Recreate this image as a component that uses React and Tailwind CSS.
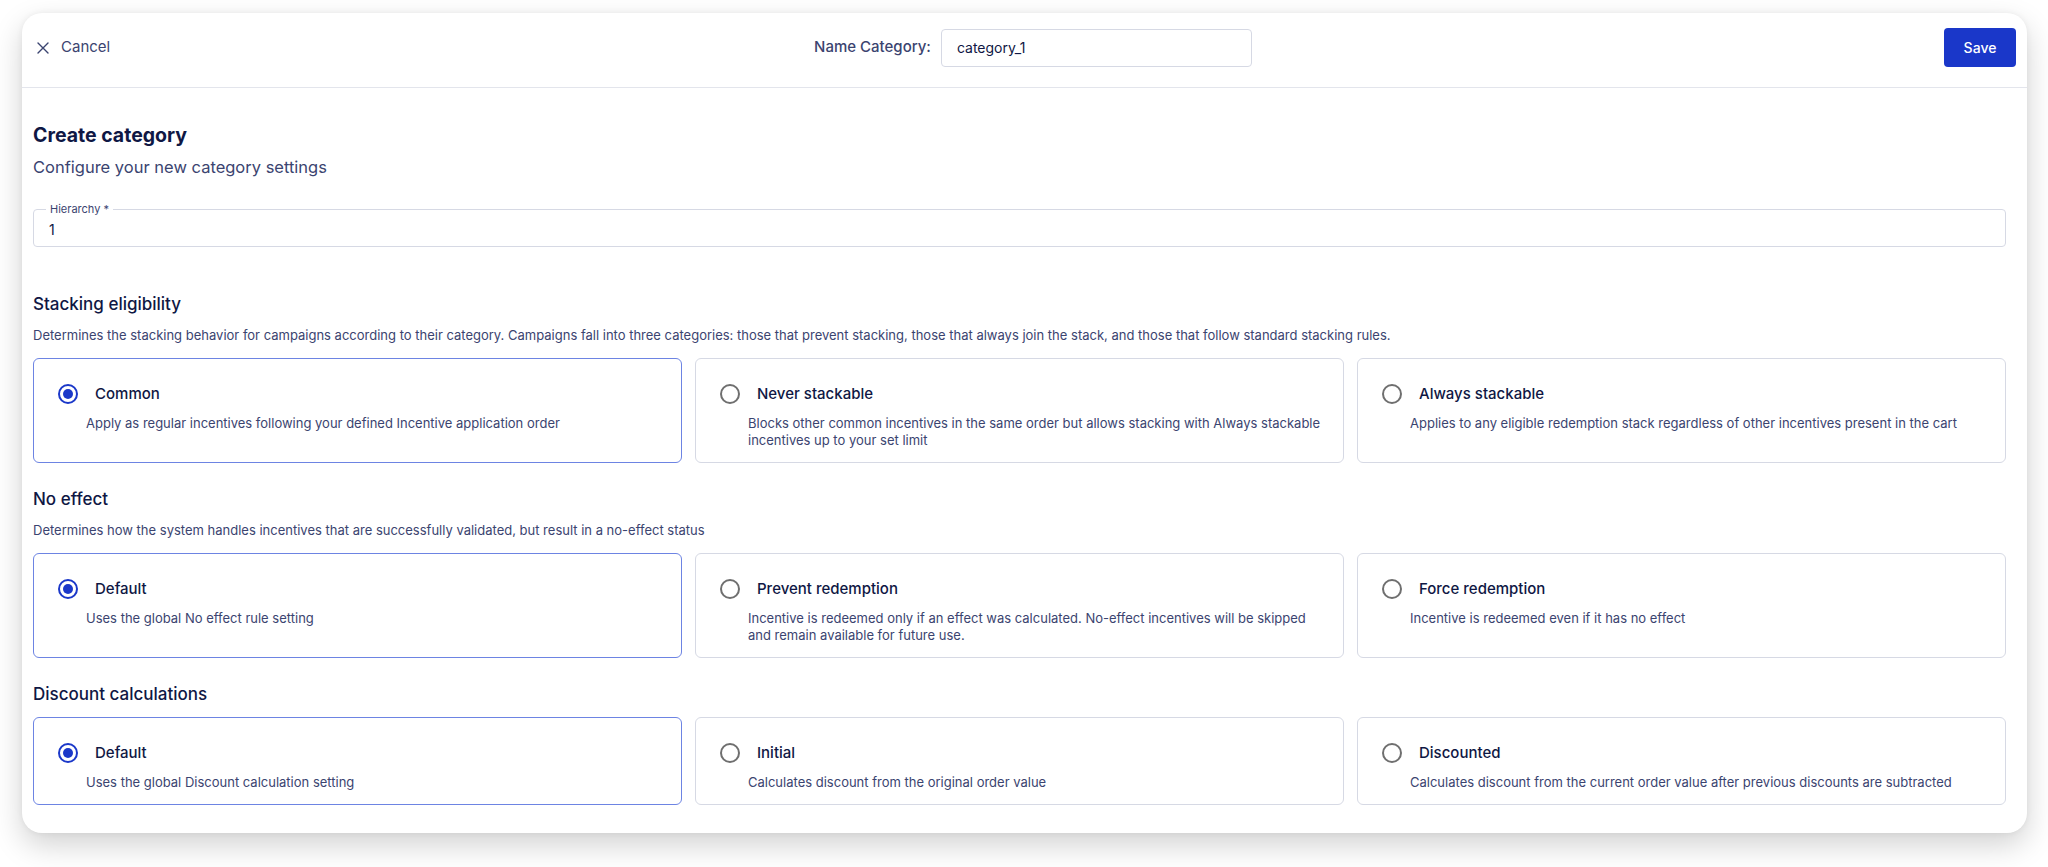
import React from "react";

const NAVY = "text-[#0f1744]";

function Radio({ checked }) {
  if (checked) {
    return (
      <span className="flex h-[20px] w-[20px] shrink-0 items-center justify-center rounded-full border-2 border-[#1b38c9]">
        <span className="h-[10px] w-[10px] rounded-full bg-[#1b38c9]" />
      </span>
    );
  }
  return <span className="h-[20px] w-[20px] shrink-0 rounded-full border-2 border-[#6f6f6f]" />;
}

function OptionCard({ title, desc, checked }) {
  return (
    <div
      className={
        "rounded-[6px] border bg-white pl-[24px] pr-[20px] pt-[25px] pb-[13px] " +
        (checked ? "border-[#6d84e3]" : "border-[#d6d9e4]")
      }
    >
      <div className="flex h-[20px] items-center">
        <Radio checked={checked} />
        <span className={"ml-[17px] text-[15px] font-medium leading-[20px] " + NAVY}>{title}</span>
      </div>
      <p className="mt-[11px] ml-[28px] text-[13px] leading-[17px] text-[#3b4470]">{desc}</p>
    </div>
  );
}

function Section({ title, desc, options, first }) {
  return (
    <section className={first ? "mt-[43px]" : "mt-[22px]"}>
      <h2 className={"text-[17px] font-medium leading-[28px] " + NAVY}>{title}</h2>
      {desc && <p className="mt-[9px] text-[13px] leading-[16px] text-[#3b4470]">{desc}</p>}
      <div className={"grid grid-cols-3 gap-[13px] " + (desc ? "mt-[15px]" : "mt-[9px]")}>
        {options.map((o) => (
          <OptionCard key={o.title} {...o} />
        ))}
      </div>
    </section>
  );
}

export default function App() {
  return (
    <div
      className="h-[867px] w-[2048px] overflow-hidden bg-white pt-[13px] pl-[22px] pr-[21px]"
      style={{ fontFamily: "Inter, 'Noto Sans', sans-serif" }}
    >
      <div className="h-[820px] overflow-hidden rounded-[20px] bg-white shadow-[0_12px_30px_rgba(0,0,0,0.18),0_0_6px_rgba(0,0,0,0.06)]">
        {/* Header */}
        <header className="grid h-[75px] grid-cols-[1fr_auto_1fr] items-center border-b border-[#e3e5ec] pl-[15px] pr-[11px] pb-[5px]">
          <button className="flex items-center gap-[12px] justify-self-start text-[15px] text-[#3b4470]">
            <svg width="12" height="12" viewBox="0 0 12 12" fill="none" stroke="#3b4470" strokeWidth="1.4" strokeLinecap="round">
              <path d="M1 1l10 10M11 1L1 11" />
            </svg>
            Cancel
          </button>
          <div className="ml-[13px] flex items-center gap-[10px]">
            <span className="text-[15px] font-medium text-[#3b4470]">Name Category:</span>
            <div className="flex h-[38px] w-[311px] items-center rounded-[4px] border border-[#d6d9e4] px-[15px] text-[14px] text-[#0f1744]">
              category_1
            </div>
          </div>
          <button className="h-[39px] w-[72px] justify-self-end rounded-[4px] bg-[#1a37c9] text-[14px] font-medium text-white">
            Save
          </button>
        </header>

        {/* Content */}
        <main className="pl-[11px] pr-[21px] pt-[33px]">
          <h1 className={"text-[19.5px] font-bold leading-[28px] " + NAVY}>Create category</h1>
          <p className="mt-[6px] text-[16.5px] leading-[24px] text-[#3b4470]">Configure your new category settings</p>

          <div className="relative mt-[30px] flex h-[38px] items-center rounded-[4px] border border-[#d6d9e4] pl-[15px]">
            <span className="absolute -top-[8px] left-[12px] bg-white px-[4px] text-[11px] leading-[14px] text-[#3b4470]">
              Hierarchy *
            </span>
            <span className={"mt-[2px] text-[14px] " + NAVY}>1</span>
          </div>

          <Section
            first
            title="Stacking eligibility"
            desc="Determines the stacking behavior for campaigns according to their category. Campaigns fall into three categories: those that prevent stacking, those that always join the stack, and those that follow standard stacking rules."
            options={[
              { title: "Common", desc: "Apply as regular incentives following your defined Incentive application order", checked: true },
              { title: "Never stackable", desc: "Blocks other common incentives in the same order but allows stacking with Always stackable incentives up to your set limit" },
              { title: "Always stackable", desc: "Applies to any eligible redemption stack regardless of other incentives present in the cart" },
            ]}
          />
          <Section
            title="No effect"
            desc="Determines how the system handles incentives that are successfully validated, but result in a no-effect status"
            options={[
              { title: "Default", desc: "Uses the global No effect rule setting", checked: true },
              { title: "Prevent redemption", desc: "Incentive is redeemed only if an effect was calculated. No-effect incentives will be skipped and remain available for future use." },
              { title: "Force redemption", desc: "Incentive is redeemed even if it has no effect" },
            ]}
          />
          <Section
            title="Discount calculations"
            options={[
              { title: "Default", desc: "Uses the global Discount calculation setting", checked: true },
              { title: "Initial", desc: "Calculates discount from the original order value" },
              { title: "Discounted", desc: "Calculates discount from the current order value after previous discounts are subtracted" },
            ]}
          />
          <section className="mt-[24px]">
            <h2 className="text-[17px] font-medium leading-[28px] text-[#0f1744]">Applicable redemptions</h2>
          </section>
        </main>
      </div>
    </div>
  );
}
